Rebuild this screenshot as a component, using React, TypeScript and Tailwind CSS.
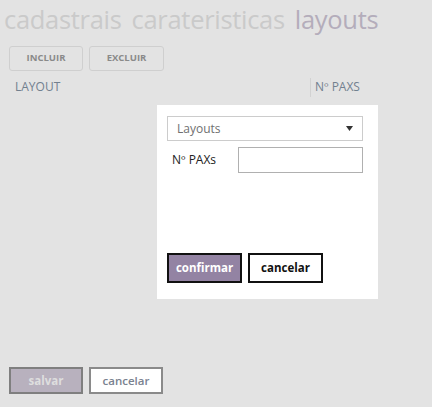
import React from 'react';

const App: React.FC = () => {
  return (
    <div
      className="w-[432px] h-[407px] bg-[#e3e3e3] flex flex-col overflow-hidden"
      style={{ fontFamily: '"Open Sans", "Segoe UI", sans-serif' }}
    >
      {/* Tabs */}
      <div className="flex items-baseline gap-[10px] pl-[4px] pt-[1px] h-[40px] text-[25.5px] leading-[36px] tracking-[-0.3px]">
        <span className="text-[#cacaca]">cadastrais</span>
        <span className="text-[#cacaca]">carateristicas</span>
        <span className="text-[#b4adbb]">layouts</span>
      </div>

      {/* Toolbar */}
      <div className="flex gap-[6px] pl-[9px] mt-[6px]">
        <button className="w-[74px] h-[25px] rounded-[3px] border border-[#cfcfcf] bg-[#e3e3e3] text-[9.5px] font-bold text-[#8a8a8a]">
          INCLUIR
        </button>
        <button className="w-[75px] h-[25px] rounded-[3px] border border-[#cfcfcf] bg-[#e3e3e3] text-[9.5px] font-bold text-[#8a8a8a]">
          EXCLUIR
        </button>
      </div>

      {/* Grid header */}
      <div className="flex items-center h-[20px] mt-[6px] text-[12px] text-[#72808f]">
        <span className="pl-[15px] flex-1">LAYOUT</span>
        <div className="w-px h-[19px] bg-[#d2d2d2] mr-[4px]" />
        <span className="w-[117px]">Nº PAXS</span>
      </div>

      {/* Dialog */}
      <div className="ml-[157px] mt-[8px] w-[221px] h-[194px] bg-white flex flex-col pl-[10px] pr-[15px] pt-[11px]">
        <div className="h-[25px] border border-[#cccccc] flex items-center justify-between pl-[9px] pr-[9px] text-[12px] text-[#707070]">
          <span>Layouts</span>
          <svg width="7" height="5" viewBox="0 0 7 5">
            <path d="M0 0 H7 L3.5 5 Z" fill="#333" />
          </svg>
        </div>
        <div className="flex items-center mt-[6px]">
          <span className="w-[71px] pl-[5px] text-[12px] text-[#222]">Nº PAXs</span>
          <div className="flex-1 h-[26px] border border-[#b0b0b0]" />
        </div>
        <div className="flex gap-[6px] mt-[80px]">
          <button className="w-[75px] h-[30px] border-2 border-[#111] bg-[#9383a3] text-[11.5px] font-bold text-white">
            confirmar
          </button>
          <button className="w-[75px] h-[30px] border-2 border-[#111] bg-white text-[11.5px] font-bold text-[#111]">
            cancelar
          </button>
        </div>
      </div>

      {/* Footer */}
      <div className="flex gap-[6px] pl-[9px] mt-[68px]">
        <button className="w-[74px] h-[27px] border-2 border-[#7f7f7f] bg-[#b8b1be] text-[11.5px] font-bold text-[#dedede]">
          salvar
        </button>
        <button className="w-[74px] h-[27px] border-2 border-[#8a8a8a] bg-white text-[11.5px] font-semibold text-[#7a8290]">
          cancelar
        </button>
      </div>
    </div>
  );
};

export default App;
